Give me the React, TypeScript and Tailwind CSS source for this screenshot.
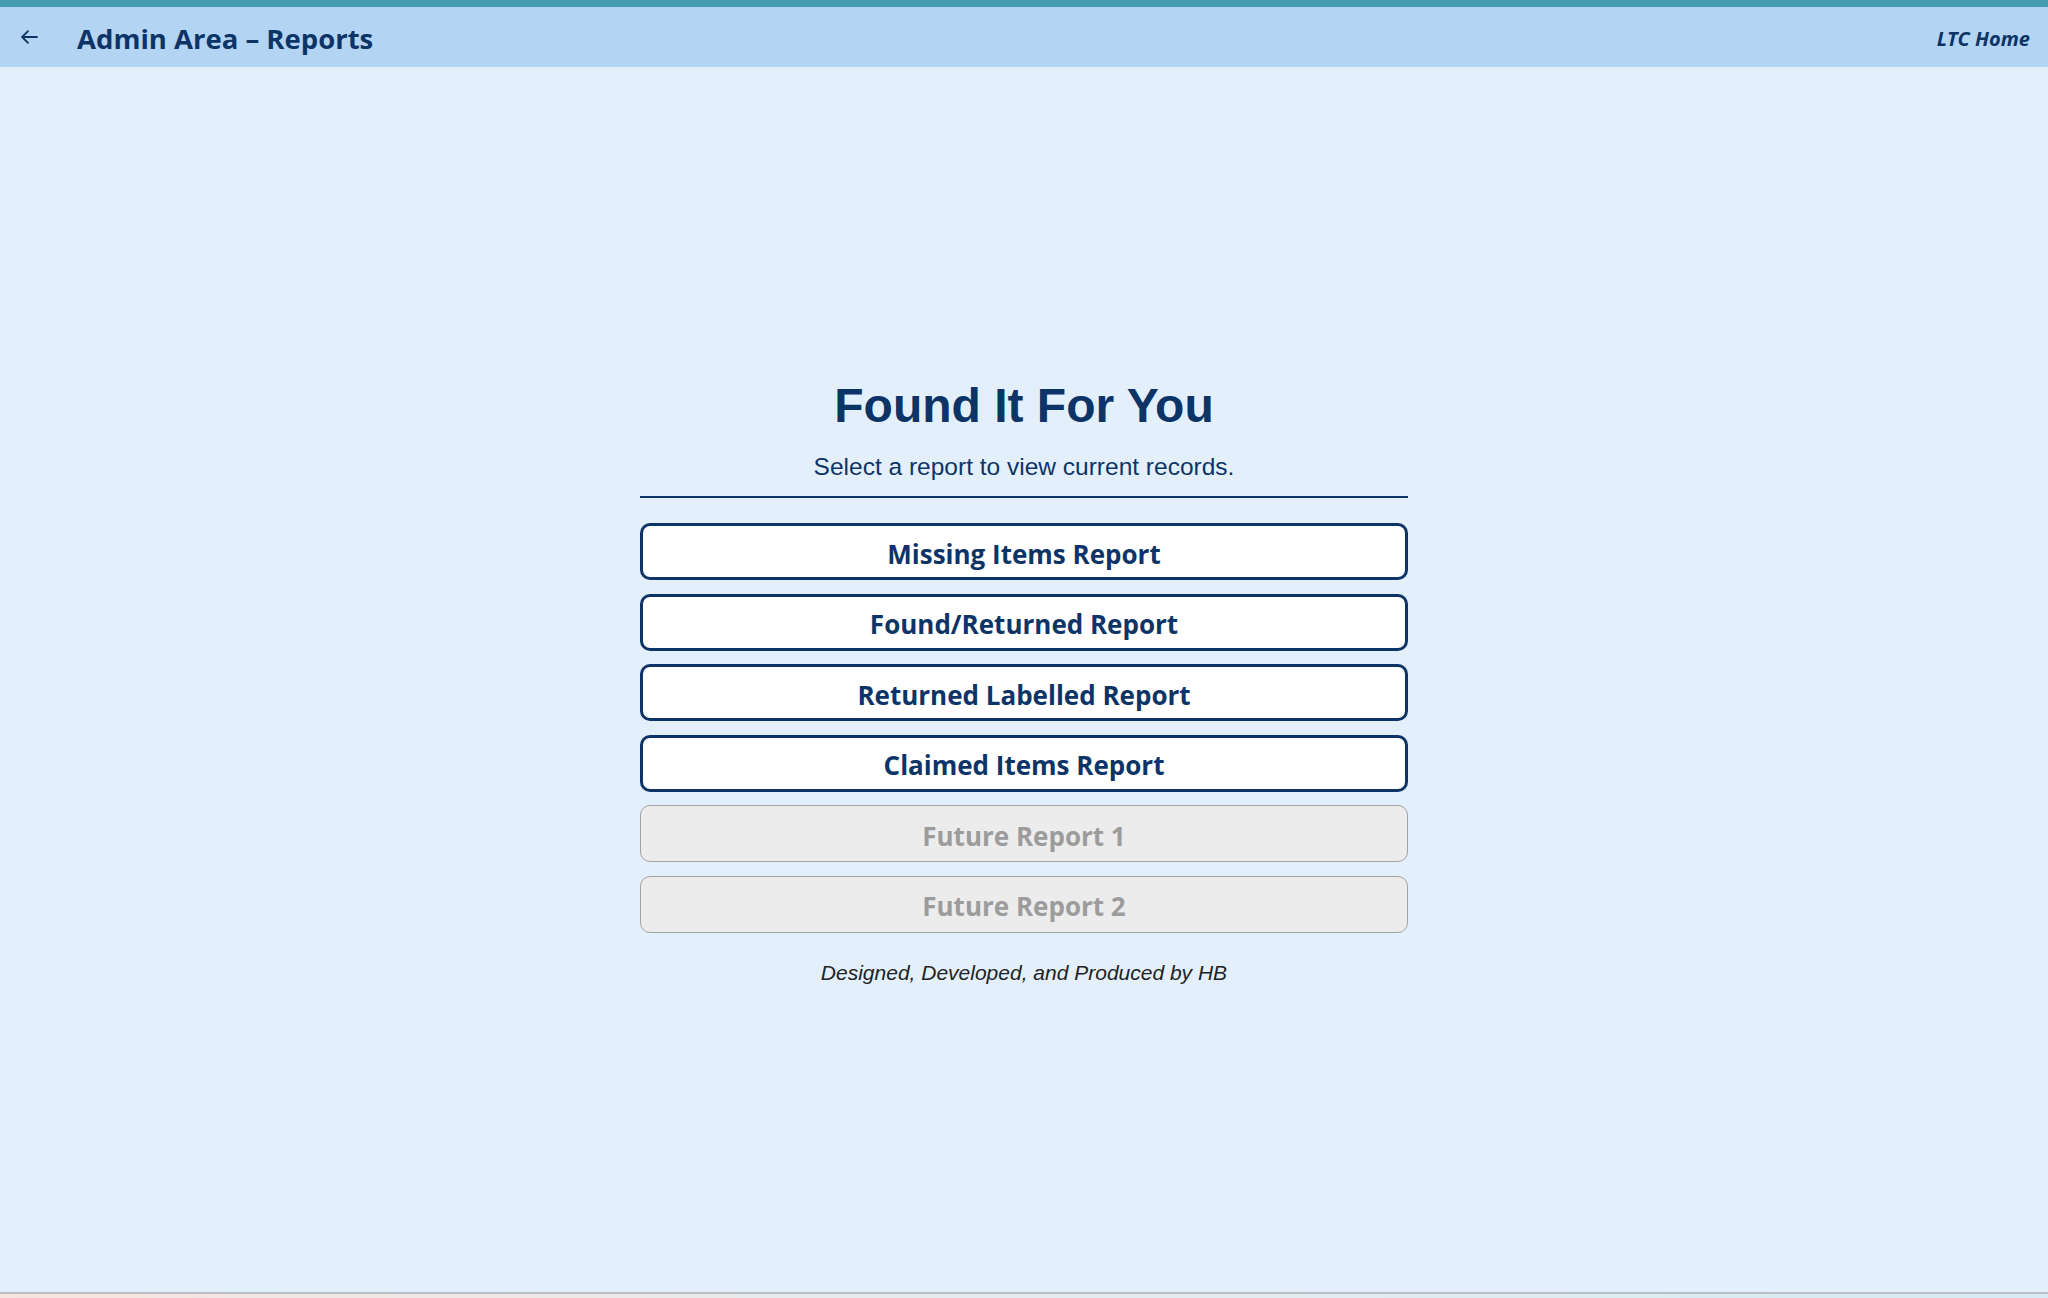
const REPORTS = [
  { label: "Missing Items Report", enabled: true },
  { label: "Found/Returned Report", enabled: true },
  { label: "Returned Labelled Report", enabled: true },
  { label: "Claimed Items Report", enabled: true },
  { label: "Future Report 1", enabled: false },
  { label: "Future Report 2", enabled: false },
];

const UI_FONT = "font-['Segoe_UI','Open_Sans','Noto_Sans',sans-serif]";
const ARIAL = "font-['Liberation_Sans',Arial,sans-serif]";

export default function App() {
  return (
    <div className="flex h-[1298px] flex-col overflow-hidden bg-[#e3f0fc]">
      <div className="h-[7px] shrink-0 bg-[#469caf]" />

      <header className="flex h-[60px] shrink-0 items-center bg-[#b3d5f3] pl-[21px] pr-[18px] text-[#0d3466]">
        <button className="flex h-[14px] w-[17px] items-center" aria-label="Back">
          <svg width="17" height="14" viewBox="0 0 17 14" fill="none" stroke="#0d3466" strokeWidth="1.8" strokeLinecap="round" strokeLinejoin="round">
            <path d="M16 7H1.5" />
            <path d="M7 1.2 1.2 7 7 12.8" />
          </svg>
        </button>
        <h1 className={`ml-[39px] pt-[3px] text-[27.5px] font-bold ${UI_FONT}`}>
          Admin Area – Reports
        </h1>
        <a className={`ml-auto pt-[3px] text-[20px] font-bold italic ${UI_FONT}`}>LTC Home</a>
      </header>

      <main className="flex flex-1 items-center justify-center pt-[10px]">
        <div className="flex w-[768px] flex-col">
          <h2 className={`text-center text-[48px] font-bold leading-[48px] text-[#0d3466] ${ARIAL}`}>
            Found It For You
          </h2>
          <p className={`mt-[21px] text-center text-[24.5px] leading-[32px] text-[#0d3466] ${ARIAL}`}>
            Select a report to view current records.
          </p>
          <div className="mt-[13px] h-[2px] bg-[#0d3466]" />

          <div className="mt-[25px] flex flex-col gap-[13.5px]">
            {REPORTS.map((r) =>
              r.enabled ? (
                <button
                  key={r.label}
                  className={`flex h-[57px] items-center justify-center rounded-[10px] border-[3px] border-[#0d3466] bg-white pt-[5px] text-[26px] font-bold text-[#0d3466] ${UI_FONT}`}
                >
                  {r.label}
                </button>
              ) : (
                <button
                  key={r.label}
                  disabled
                  className={`flex h-[57px] items-center justify-center rounded-[10px] border-[1.5px] border-[#a3a3a3] bg-[#ececec] pt-[5px] text-[26px] font-bold text-[#9c9c9c] ${UI_FONT}`}
                >
                  {r.label}
                </button>
              )
            )}
          </div>

          <p className={`mt-[26px] text-center text-[21px] italic leading-[28px] text-[#222] ${ARIAL}`}>
            Designed, Developed, and Produced by HB
          </p>
        </div>
      </main>

      <div className="h-[2px] shrink-0 bg-[#b8bec4]" />
      <div className="h-[4px] shrink-0 bg-gradient-to-r from-[#f6e4de] via-[#e4ecf0] to-[#d8ebf4]" />
    </div>
  );
}
